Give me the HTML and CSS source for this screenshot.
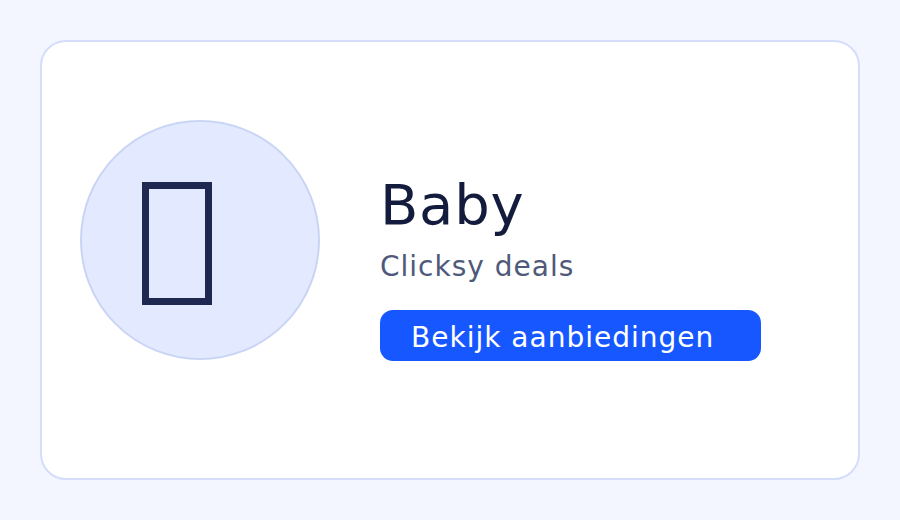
FILE: index.html
```html
<!DOCTYPE html>
<html lang="nl">
<head>
  <meta charset="UTF-8">
  <title>Baby - Clicksy deals</title>
  <link rel="stylesheet" href="styles.css">
</head>
<body>
  <div class="card">
    <div class="avatar">
      <span class="glyph"></span>
    </div>
    <div class="details">
      <h1 class="title">Baby</h1>
      <p class="subtitle">Clicksy deals</p>
      <a href="#" class="cta">Bekijk aanbiedingen</a>
    </div>
  </div>
</body>
</html>
```

FILE: styles.css
```css
body {
  margin: 0;
  padding: 40px;
  background-color: #f3f6fe;
  font-family: 'DejaVu Sans', sans-serif;
  box-sizing: border-box;
  width: 900px;
  height: 520px;
}

.card {
  box-sizing: border-box;
  width: 820px;
  height: 440px;
  background-color: #ffffff;
  border: 2px solid #d4defb;
  border-radius: 26px;
  display: flex;
  align-items: flex-start;
  padding: 78px 38px 0;
  gap: 60px;
}

.avatar {
  box-sizing: border-box;
  width: 240px;
  height: 240px;
  flex-shrink: 0;
  border-radius: 50%;
  background-color: #e3eaff;
  border: 2px solid #c9d5f4;
  display: flex;
  align-items: flex-start;
  padding: 60px 0 0 60px;
}

.glyph {
  box-sizing: border-box;
  display: block;
  width: 70px;
  height: 123px;
  border: 7.5px solid #1f2850;
}

.details {
  display: flex;
  flex-direction: column;
  align-items: flex-start;
  padding-top: 53px;
}

.title {
  margin: 0;
  font-size: 56px;
  font-weight: normal;
  line-height: 64px;
  color: #141c3d;
  letter-spacing: 0.7px;
}

.subtitle {
  margin: 12px 0 0;
  font-size: 28px;
  line-height: 36px;
  color: #4f5a7a;
  letter-spacing: 1px;
}

.cta {
  box-sizing: border-box;
  margin-top: 25px;
  width: 381px;
  height: 51px;
  padding: 4px 31px 0;
  display: flex;
  align-items: center;
  background-color: #1657ff;
  color: #ffffff;
  border-radius: 13px;
  font-size: 28px;
  letter-spacing: 1px;
  text-decoration: none;
}
```
